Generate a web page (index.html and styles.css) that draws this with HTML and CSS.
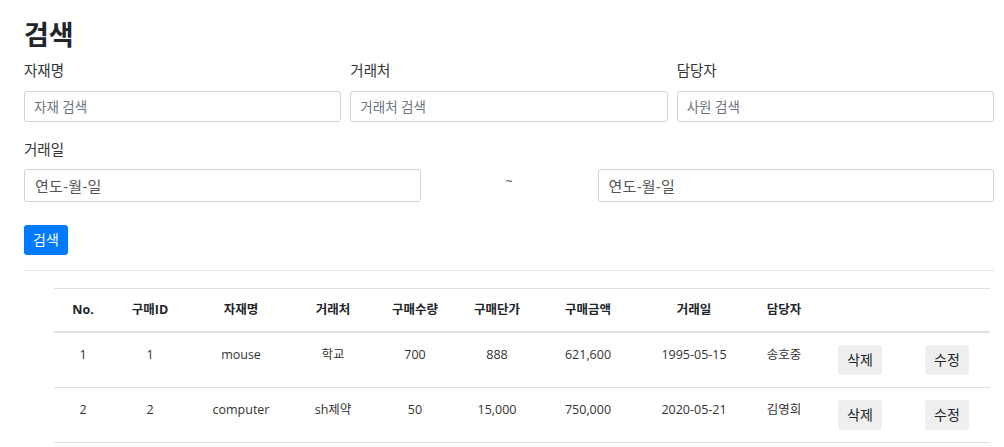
FILE: index.html
```html
<!DOCTYPE html>
<html lang="ko">
<head>
<meta charset="utf-8">
<title>검색</title>
<link rel="stylesheet" href="styles.css">
</head>
<body>
<main class="page">
  <h1 class="title">검색</h1>
  <div class="fields">
    <div class="field">
      <label class="label">자재명</label>
      <input class="control" type="text" placeholder="자재 검색">
    </div>
    <div class="field">
      <label class="label">거래처</label>
      <input class="control" type="text" placeholder="거래처 검색">
    </div>
    <div class="field">
      <label class="label">담당자</label>
      <input class="control" type="text" placeholder="사원 검색">
    </div>
  </div>
  <div class="field date-field">
    <label class="label">거래일</label>
    <div class="date-row">
      <input class="control date" type="text" placeholder="연도-월-일">
      <span class="tilde">~</span>
      <input class="control date" type="text" placeholder="연도-월-일">
    </div>
  </div>
  <button class="btn btn-primary" type="button">검색</button>
  <hr class="divider">
  <div class="table-wrap">
    <table class="grid">
      <colgroup>
        <col><col><col><col><col><col><col><col><col><col><col>
      </colgroup>
      <thead>
        <tr>
          <th>No.</th><th>구매ID</th><th>자재명</th><th>거래처</th><th>구매수량</th><th>구매단가</th><th>구매금액</th><th>거래일</th><th>담당자</th><th></th><th></th>
        </tr>
      </thead>
      <tbody>
        <tr>
          <td>1</td><td>1</td><td>mouse</td><td>학교</td><td>700</td><td>888</td><td>621,600</td><td>1995-05-15</td><td>송호중</td>
          <td><button class="btn btn-light" type="button">삭제</button></td>
          <td class="last"><button class="btn btn-light" type="button">수정</button></td>
        </tr>
        <tr>
          <td>2</td><td>2</td><td>computer</td><td>sh제약</td><td>50</td><td>15,000</td><td>750,000</td><td>2020-05-21</td><td>김영희</td>
          <td><button class="btn btn-light" type="button">삭제</button></td>
          <td class="last"><button class="btn btn-light" type="button">수정</button></td>
        </tr>
      </tbody>
    </table>
  </div>
</main>
</body>
</html>
```

FILE: styles.css
```css
* { box-sizing: border-box; }
html, body { margin: 0; padding: 0; background: #fff; }
body {
  font-family: "Open Sans", "Noto Sans CJK KR", sans-serif;
  color: #212529;
}
.page {
  padding: 20px 10px 0 24px;
}
.title {
  margin: 0;
  font-size: 27px;
  line-height: 29px;
  font-weight: 700;
  color: #212529;
}
.fields {
  margin-top: 10px;
  display: grid;
  grid-template-columns: 1fr 1fr 1fr;
  column-gap: 9px;
}
.field {
  display: flex;
  flex-direction: column;
  margin-bottom: 16px;
}
.label {
  font-size: 14.5px;
  line-height: 24px;
  margin-bottom: 8px;
  color: #333;
}
.control {
  width: 100%;
  height: 31px;
  padding: 4px 9px;
  border: 1px solid #ced4da;
  border-radius: 3px;
  font-family: inherit;
  font-size: 13.5px;
  color: #495057;
  background: #fff;
  outline: none;
}
.control::placeholder { color: #6c757d; }
.date-field .label { margin-bottom: 7px; }
.date-field { margin-bottom: 23px; }
.date-row {
  display: grid;
  grid-template-columns: 1fr 177px 1fr;
  align-items: start;
}
.control.date {
  height: 33px;
  font-size: 15px;
  padding: 4px 10px;
  letter-spacing: 0.3px;
}
.control.date::placeholder { color: #555; }
.tilde {
  text-align: center;
  font-size: 13px;
  line-height: 20px;
  padding-top: 2px;
  color: #555;
}
.btn {
  display: inline-block;
  font-family: inherit;
  font-size: 14px;
  line-height: 22px;
  padding: 4px 9px;
  border: none;
  border-radius: 3px;
  cursor: pointer;
}
.btn-primary {
  background: #007bff;
  color: #fff;
  height: 30px;
}
.btn-light {
  background: #efefef;
  color: #212529;
  height: 30px;
}
.divider {
  margin: 15px 0 0 0;
  border: 0;
  border-top: 1px solid #e5e5e5;
}
.table-wrap {
  margin: 17px 4px 0 30px;
}
.grid {
  width: 100%;
  table-layout: fixed;
  border-collapse: collapse;
  font-size: 12.5px;
}
.grid col:nth-child(1) { width: 58px; }
.grid col:nth-child(2) { width: 76px; }
.grid col:nth-child(3) { width: 106px; }
.grid col:nth-child(4) { width: 78px; }
.grid col:nth-child(5) { width: 86px; }
.grid col:nth-child(6) { width: 78px; }
.grid col:nth-child(7) { width: 104px; }
.grid col:nth-child(8) { width: 108px; }
.grid col:nth-child(9) { width: 72px; }
.grid col:nth-child(10) { width: 80px; }
.grid col:nth-child(11) { width: 90px; }
.grid th {
  font-weight: 700;
  text-align: center;
  line-height: 20px;
  padding: 11px 0;
  border-top: 1px solid #dee2e6;
  border-bottom: 2px solid #dee2e6;
  color: #212529;
}
.grid td {
  text-align: center;
  vertical-align: top;
  line-height: 20px;
  padding: 12px 0;
  border-bottom: 1px solid #dee2e6;
  color: #333;
}
.grid td.last { padding-left: 4px; }
```
